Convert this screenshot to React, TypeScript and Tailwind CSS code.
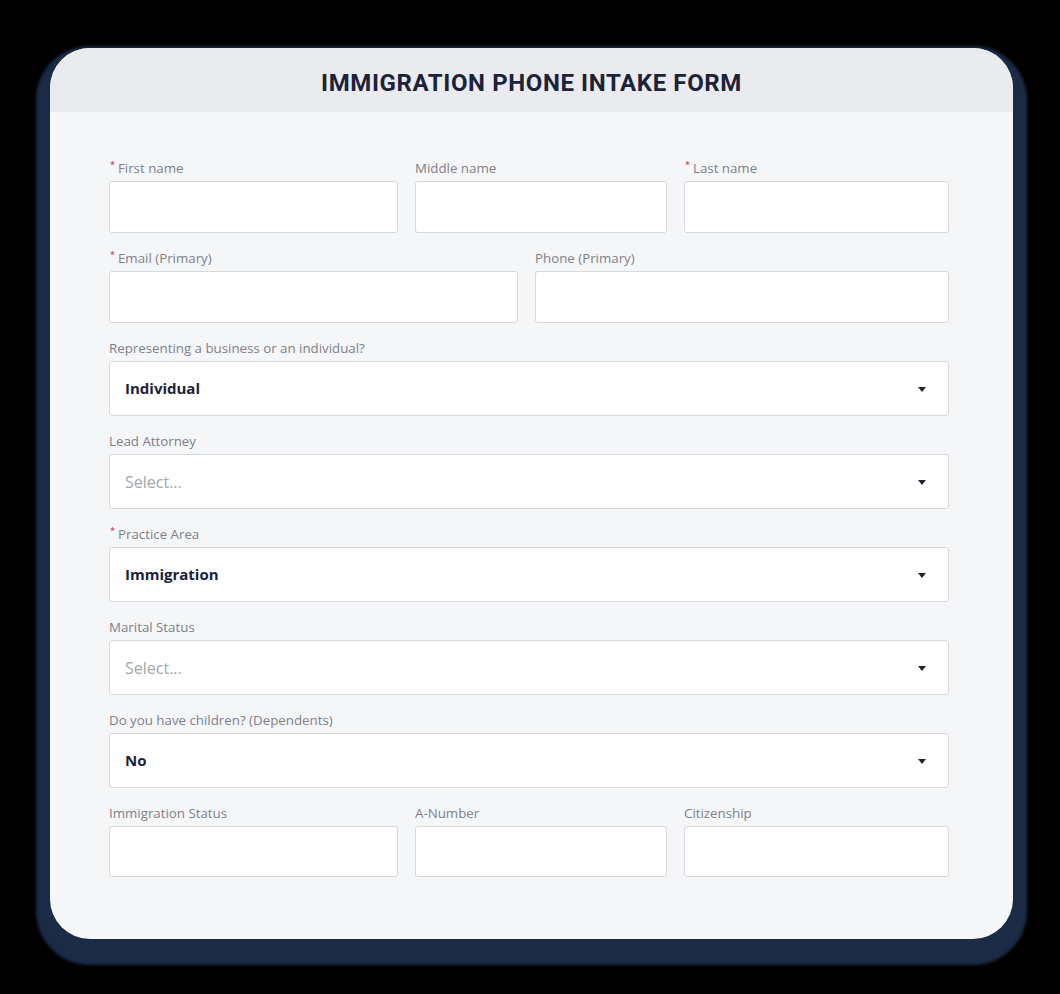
import React from "react";

const font = { fontFamily: "'Open Sans', Lato, Arial, sans-serif" };

function Label({ text, required }: { text: string; required?: boolean }) {
  return (
    <div className="h-[16px] mb-[5px] flex items-center text-[13.3px] leading-[16px] text-[#7d8188] whitespace-nowrap">
      {required && (
        <span className="text-[#c0282d] text-[9px] leading-none mr-[3px] -mt-[7px] ml-[1px]">*</span>
      )}
      <span>{text}</span>
    </div>
  );
}

function TextField({ label, required, h = "h-[52px]" }: { label: string; required?: boolean; h?: string }) {
  return (
    <div className="flex flex-col">
      <Label text={label} required={required} />
      <div className={`${h} bg-white border border-[#d6d8db] rounded-[3px]`} />
    </div>
  );
}

function SelectField({
  label,
  required,
  value,
}: {
  label: string;
  required?: boolean;
  value?: string;
}) {
  return (
    <div className="flex flex-col">
      <Label text={label} required={required} />
      <div className="h-[55px] bg-white border border-[#d6d8db] rounded-[3px] flex items-center justify-between pl-[15px] pr-[22px]">
        {value ? (
          <span className="text-[15px] font-bold text-[#1c2238]">{value}</span>
        ) : (
          <span className="text-[16px] text-[#a3a6ab]">Select...</span>
        )}
        <svg width="8" height="5" viewBox="0 0 8 5" className="mt-[1px]">
          <path d="M0 0 L8 0 L4 5 Z" fill="#1f2430" />
        </svg>
      </div>
    </div>
  );
}

export default function App() {
  return (
    <div className="min-h-[994px] w-full bg-black pt-[48px] pl-[50px]" style={font}>
      <div className="w-[963px] h-[891px] rounded-[40px] overflow-hidden bg-[#f5f6f8] shadow-[0_12px_3px_14px_#1b2b46]">
        <div className="h-[64px] bg-[#e9ebee] flex items-center justify-center">
          <h1
            className="text-[24px] font-bold tracking-[0.6px] text-[#1c2238] mt-[6px]"
            style={{ fontFamily: "Roboto, 'Liberation Sans', sans-serif" }}
          >
            IMMIGRATION PHONE INTAKE FORM
          </h1>
        </div>
        <div className="pt-[48px] pl-[59px] w-[899px] flex flex-col gap-[17px]">
          <div className="grid grid-cols-[289px_252px_265px] gap-x-[17px]">
            <TextField label="First name" required />
            <TextField label="Middle name" />
            <TextField label="Last name" required />
          </div>
          <div className="grid grid-cols-[409px_414px] gap-x-[17px]">
            <TextField label="Email (Primary)" required />
            <TextField label="Phone (Primary)" />
          </div>
          <SelectField label="Representing a business or an individual?" value="Individual" />
          <SelectField label="Lead Attorney" />
          <SelectField label="Practice Area" required value="Immigration" />
          <SelectField label="Marital Status" />
          <SelectField label="Do you have children? (Dependents)" value="No" />
          <div className="grid grid-cols-[289px_252px_265px] gap-x-[17px]">
            <TextField label="Immigration Status" h="h-[51px]" />
            <TextField label="A-Number" h="h-[51px]" />
            <TextField label="Citizenship" h="h-[51px]" />
          </div>
        </div>
      </div>
    </div>
  );
}
